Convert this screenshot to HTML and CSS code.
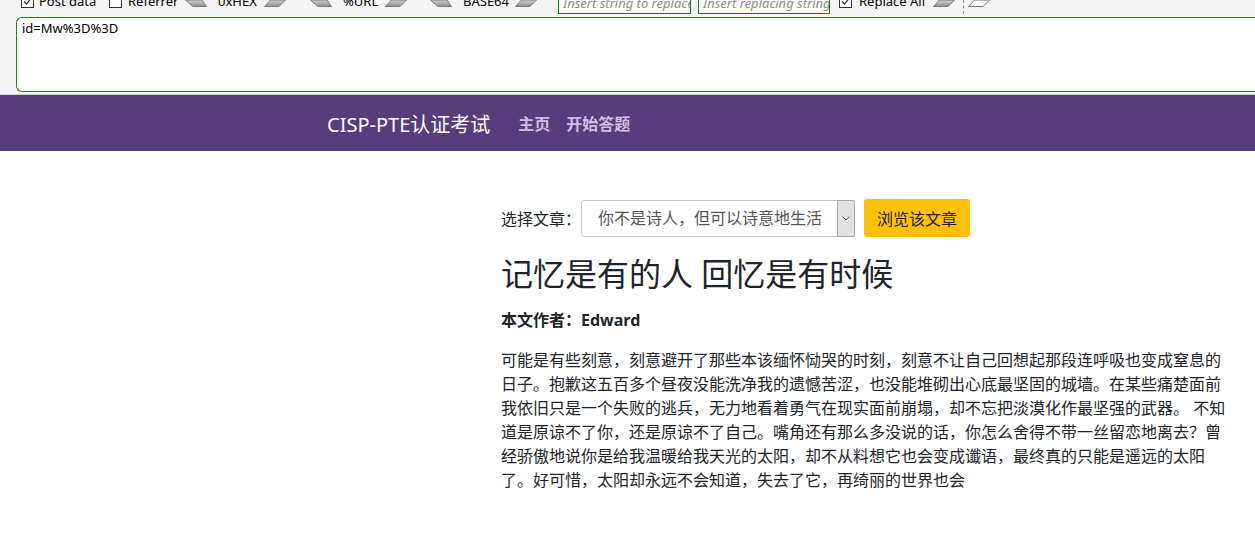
FILE: index.html
```html
<!DOCTYPE html>
<html lang="zh-CN">
<head>
<meta charset="utf-8">
<title>CISP-PTE认证考试</title>
<link rel="stylesheet" href="styles.css">
</head>
<body>
<div class="hackbar">
  <div class="toolbar">
    <div class="toolbar-row">
      <span class="cb"><svg viewBox="0 0 13 13" width="13" height="13"><rect x="0.5" y="0.5" width="12" height="12" fill="#fff" stroke="#333"/><path d="M3 6.5 L5.5 9 L10 3.5" fill="none" stroke="#333" stroke-width="1.2"/></svg></span>
      <span class="lbl w-post">Post data</span>
      <span class="cb cb-ref"><svg viewBox="0 0 13 13" width="13" height="13"><rect x="0.5" y="0.5" width="12" height="12" fill="#fff" stroke="#333"/></svg></span>
      <span class="lbl w-ref">Referrer</span>
      <svg class="shape sl" viewBox="0 0 22 7" width="22" height="7"><defs><linearGradient id="g1" x1="0" y1="0" x2="0" y2="1"><stop offset="0" stop-color="#d4d4d4"/><stop offset="1" stop-color="#8c8c8c"/></linearGradient></defs><polygon points="0.5,0 17,0 21.5,6.5 8,6.5" fill="url(#g1)" stroke="#7a7a7a"/></svg>
      <span class="lbl w-hex">0xHEX</span>
      <svg class="shape sr" viewBox="0 0 22 7" width="22" height="7"><polygon points="6.5,0 21.5,0 15,6.5 0.5,6.5" fill="url(#g1)" stroke="#7a7a7a"/></svg>
      <svg class="shape sl" viewBox="0 0 22 7" width="22" height="7"><polygon points="0.5,0 17,0 21.5,6.5 8,6.5" fill="url(#g1)" stroke="#7a7a7a"/></svg>
      <span class="lbl w-url">%URL</span>
      <svg class="shape sr sr2" viewBox="0 0 22 7" width="22" height="7"><polygon points="6.5,0 21.5,0 15,6.5 0.5,6.5" fill="url(#g1)" stroke="#7a7a7a"/></svg>
      <svg class="shape sl" viewBox="0 0 22 7" width="22" height="7"><polygon points="0.5,0 17,0 21.5,6.5 8,6.5" fill="url(#g1)" stroke="#7a7a7a"/></svg>
      <span class="lbl w-b64">BASE64</span>
      <svg class="shape sr sr3" viewBox="0 0 22 7" width="22" height="7"><polygon points="6.5,0 21.5,0 15,6.5 0.5,6.5" fill="url(#g1)" stroke="#7a7a7a"/></svg>
      <span class="inp inp1">Insert string to replace</span>
      <span class="inp inp2">Insert replacing string</span>
      <span class="cb cb-all"><svg viewBox="0 0 13 13" width="13" height="13"><rect x="0.5" y="0.5" width="12" height="12" fill="#fff" stroke="#333"/><path d="M3 6.5 L5.5 9 L10 3.5" fill="none" stroke="#333" stroke-width="1.2"/></svg></span>
      <span class="lbl w-all">Replace All</span>
      <svg class="shape sr sr4" viewBox="0 0 22 7" width="22" height="7"><polygon points="6.5,0 21.5,0 15,6.5 0.5,6.5" fill="url(#g1)" stroke="#7a7a7a"/></svg>
      <span class="sep"></span>
      <svg class="shape" viewBox="0 0 22 7" width="22" height="7"><polygon points="6.5,0 21.5,0 15,6.5 0.5,6.5" fill="#fff" stroke="#7a7a7a"/></svg>
    </div>
  </div>
  <div class="post">id=Mw%3D%3D</div>
</div>

<nav class="navbar">
  <span class="brand">CISP-PTE认证考试</span>
  <a class="nav-link" href="#">主页</a>
  <a class="nav-link" href="#">开始答题</a>
</nav>

<main class="content">
  <div class="pick">
    <span class="pick-label">选择文章：</span>
    <div class="select">
      <span class="select-text">你不是诗人，但可以诗意地生活</span>
      <span class="select-arrow"><svg viewBox="0 0 8 5" width="8" height="5"><path d="M0.5 0.5 L4 4 L7.5 0.5" fill="none" stroke="#555" stroke-width="1"/></svg></span>
    </div>
    <button class="btn" type="button">浏览该文章</button>
  </div>
  <h1 class="title">记忆是有的人 回忆是有时候</h1>
  <div class="author">本文作者：Edward</div>
  <p class="body-text">可能是有些刻意，刻意避开了那些本该缅怀恸哭的时刻，刻意不让自己回想起那段连呼吸也变成窒息的日子。抱歉这五百多个昼夜没能洗净我的遗憾苦涩，也没能堆砌出心底最坚固的城墙。在某些痛楚面前我依旧只是一个失败的逃兵，无力地看着勇气在现实面前崩塌，却不忘把淡漠化作最坚强的武器。 不知道是原谅不了你，还是原谅不了自己。嘴角还有那么多没说的话，你怎么舍得不带一丝留恋地离去？曾经骄傲地说你是给我温暖给我天光的太阳，却不从料想它也会变成谶语，最终真的只能是遥远的太阳了。好可惜，太阳却永远不会知道，失去了它，再绮丽的世界也会</p>
</main>
</body>
</html>
```

FILE: styles.css
```css
* { box-sizing: border-box; }

body {
  margin: 0;
  font-family: "Noto Sans", "Noto Sans CJK SC", sans-serif;
  color: #212529;
  background: #fff;
}

/* HackBar panel */
.hackbar {
  background: #f4f4f4;
  border-bottom: 1px solid #d4d4d4;
  padding-bottom: 2px;
}

.toolbar {
  height: 17px;
  overflow: hidden;
}

.toolbar-row {
  display: flex;
  align-items: center;
  height: 26px;
  margin-top: -12px;
  padding-left: 21px;
  font-size: 13px;
  line-height: 16px;
  color: #000;
  white-space: nowrap;
}

.cb { display: flex; width: 13px; height: 13px; margin-right: 5px; }
.cb-ref { margin-right: 6px; }
.cb-all { margin-right: 7px; }

.lbl { display: block; overflow: hidden; }
.w-post { width: 70px; }
.w-ref { width: 57px; }
.w-hex { width: 46px; }
.w-url { width: 42px; }
.w-b64 { width: 52px; }
.w-all { width: 74px; }

.shape { align-self: flex-start; margin-top: 12px; flex: none; }
.sl { margin-right: 11px; }
.sr { margin-right: 24px; }
.sr2 { margin-right: 23px; }
.sr3 { margin-right: 21px; }
.sr4 { margin-right: 8px; }

.inp {
  align-self: flex-end;
  height: 24px;
  border: 1px solid #118011;
  background: #fff;
  color: #8a8a8a;
  font-style: italic;
  padding: 4px 0 0 4px;
  overflow: hidden;
  flex: none;
}
.inp1 { width: 133px; margin-right: 7px; }
.inp2 { width: 132px; margin-right: 9px; }

.sep {
  align-self: flex-start;
  margin-top: 12px;
  height: 14px;
  border-left: 1px dashed #9a9a9a;
  margin-right: 4px;
}

.post {
  margin-left: 16px;
  height: 75px;
  border: 1px solid #2a7d22;
  border-right: 0;
  border-radius: 6px 0 0 6px;
  background: #fff;
  padding: 1px 5px;
  font-size: 13px;
  line-height: 18px;
  color: #000;
}

/* Navbar */
.navbar {
  display: flex;
  align-items: center;
  height: 56px;
  background: #563d7c;
  padding-left: 327px;
}

.brand {
  font-size: 20px;
  color: #fff;
  margin-right: 20px;
}

.nav-link {
  font-size: 16px;
  font-weight: 700;
  color: #cdbfe3;
  text-decoration: none;
  padding: 0 8px;
}

/* Content */
.content {
  padding: 48px 0 0 501px;
}

.pick {
  display: flex;
  align-items: center;
  height: 38px;
}

.pick-label {
  width: 80px;
  font-size: 16px;
}

.select {
  display: flex;
  width: 274px;
  height: 37px;
  border: 1px solid #c9c9c9;
  border-radius: 3px;
  background: #fff;
}

.select-text {
  flex: 1;
  padding-left: 16px;
  font-size: 16px;
  line-height: 35px;
  color: #555;
}

.select-arrow {
  display: flex;
  align-items: center;
  justify-content: center;
  width: 18px;
  background: #e1e1e1;
  border: 1px solid #a8a8a8;
  border-radius: 0 2px 2px 0;
  margin: -1px -1px -1px 0;
}

.btn {
  margin-left: 9px;
  height: 38px;
  padding: 0 13px;
  border: 0;
  border-radius: 3px;
  background: #ffc107;
  color: #212529;
  font-family: inherit;
  font-size: 16px;
}

.title {
  margin: 17px 0 0;
  font-size: 32px;
  font-weight: 400;
  line-height: 40px;
}

.author {
  margin-top: 14px;
  font-size: 16px;
  font-weight: 700;
  line-height: 24px;
}

.body-text {
  margin: 16px 0 0;
  width: 728px;
  font-size: 16px;
  line-height: 24px;
}
```
